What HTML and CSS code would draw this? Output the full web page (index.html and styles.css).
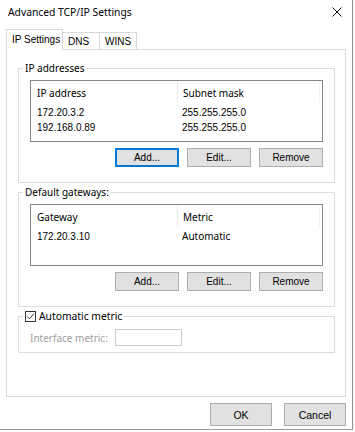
FILE: index.html
```html
<!DOCTYPE html>
<html lang="en">

<head>
    <meta charset="UTF-8">
    <meta name="viewport" content="width=device-width, initial-scale=1.0">
    <title>Advanced TCP/IP Settings</title>
    <link rel="stylesheet" href="styles.css">
</head>

<body>
    <div class="window">
        <div class="titlebar">
            <span class="title">Advanced TCP/IP Settings</span>
            <svg class="close" width="10" height="10" viewBox="0 0 10 10">
                <path d="M0.5 0.5 L9.5 9.5 M9.5 0.5 L0.5 9.5" stroke="#111" stroke-width="1" fill="none" />
            </svg>
        </div>

        <div class="tabs">
            <div class="tab active">IP Settings</div>
            <div class="tab">DNS</div>
            <div class="tab">WINS</div>
        </div>

        <div class="panel">
            <fieldset class="group">
                <legend>IP addresses</legend>
                <div class="listview">
                    <div class="lv-head">
                        <span class="col col-1">IP address</span>
                        <span class="col col-2">Subnet mask</span>
                    </div>
                    <div class="lv-row">
                        <span class="col col-1">172.20.3.2</span>
                        <span class="col col-2">255.255.255.0</span>
                    </div>
                    <div class="lv-row">
                        <span class="col col-1">192.168.0.89</span>
                        <span class="col col-2">255.255.255.0</span>
                    </div>
                </div>
                <div class="btn-row">
                    <button class="btn default">Add...</button>
                    <button class="btn">Edit...</button>
                    <button class="btn">Remove</button>
                </div>
            </fieldset>

            <fieldset class="group">
                <legend>Default gateways:</legend>
                <div class="listview">
                    <div class="lv-head">
                        <span class="col col-1">Gateway</span>
                        <span class="col col-2">Metric</span>
                    </div>
                    <div class="lv-row">
                        <span class="col col-1">172.20.3.10</span>
                        <span class="col col-2 ui">Automatic</span>
                    </div>
                </div>
                <div class="btn-row">
                    <button class="btn">Add...</button>
                    <button class="btn">Edit...</button>
                    <button class="btn">Remove</button>
                </div>
            </fieldset>

            <fieldset class="group metric-group">
                <legend class="check-legend">
                    <label class="checkbox">
                        <svg width="11" height="11" viewBox="0 0 11 11">
                            <rect x="0.5" y="0.5" width="10" height="10" fill="#fff" stroke="#333" />
                            <path d="M2.2 5.6 L4.4 7.8 L8.8 2.8" stroke="#333" stroke-width="1" fill="none" />
                        </svg>
                        Automatic metric
                    </label>
                </legend>
                <div class="metric-row">
                    <span class="disabled-label">Interface metric:</span>
                    <input type="text" class="metric-input" disabled>
                </div>
            </fieldset>
        </div>

        <div class="footer">
            <button class="btn big">OK</button>
            <button class="btn big">Cancel</button>
        </div>
    </div>
</body>

</html>
```

FILE: styles.css
```css
body {
    margin: 0;
    background-color: #fff;
    font-family: "Noto Sans", sans-serif;
    font-size: 10px;
    color: #000;
}

.window {
    width: 352px;
    height: 429px;
    border-right: 1px solid #8c8c8c;
    border-bottom: 1px solid #9a9a9a;
    box-shadow: 0 2px 1px rgba(0, 0, 0, 0.18);
    background: #fff;
}

.titlebar {
    height: 24px;
    display: flex;
    align-items: center;
    justify-content: space-between;
    padding: 0 10px 0 8px;
}

.title {
    font-size: 10.3px;
    color: #000;
}

.close {
    display: block;
}

.tabs {
    display: flex;
    align-items: flex-end;
    height: 19px;
    margin-top: 6px;
    padding-left: 6px;
    font-family: "Liberation Sans", sans-serif;
    font-size: 10px;
}

.tab {
    box-sizing: border-box;
    width: 37px;
    height: 17px;
    line-height: 18px;
    padding-left: 5px;
    white-space: nowrap;
    border: 1px solid #d9d9d9;
    border-bottom: none;
    border-left: none;
    background: #fff;
}

.tab.active {
    width: 57px;
    height: 21px;
    line-height: 19px;
    border-left: 1px solid #d9d9d9;
    margin-bottom: -1px;
    position: relative;
    z-index: 1;
}

.panel {
    margin: 0 6px;
    height: 348px;
    box-sizing: border-box;
    border: 1px solid #d9d9d9;
    padding: 11px 10px 0 11px;
}

.group {
    margin: 0 0 2px;
    padding: 5px 11px 15px 11px;
    border: 1px solid #dcdcdc;
    min-width: 0;
}

.group legend {
    padding: 0 2px;
    margin-left: -7px;
    line-height: 14px;
    font-size: 10px;
}

.listview {
    border: 1px solid #828790;
    height: 60px;
}

.lv-head {
    display: flex;
    height: 24px;
}

.lv-head .col-1 {
    border-right: 1px solid #e8e8e8;
    height: 21px;
    margin-top: 1px;
    line-height: 23px;
}

.lv-head .col-2 {
    flex: 1;
    border-right: 1px solid #f2f2f2;
    height: 21px;
    margin-top: 1px;
    line-height: 23px;
    margin-right: 2px;
}

.lv-row {
    display: flex;
    height: 15px;
    line-height: 15px;
    font-family: "Liberation Sans", sans-serif;
    font-size: 10px;
}

.lv-row .ui {
    font-family: "Noto Sans", sans-serif;
}

.col {
    display: block;
}

.col-1 {
    width: 140px;
    padding-left: 6px;
}

.col-2 {
    padding-left: 5px;
}

.btn-row {
    display: flex;
    justify-content: flex-end;
    gap: 8px;
    margin-top: 6px;
}

.btn {
    width: 64px;
    height: 19px;
    padding: 0;
    border: 1px solid #adadad;
    background: #e1e1e1;
    font-family: "Liberation Sans", sans-serif;
    font-size: 10px;
    color: #000;
}

.btn.default {
    border: 1px solid #0078d7;
    box-shadow: inset 0 0 0 1px #0078d7;
}

.metric-group {
    padding-bottom: 6px;
}

.check-legend {
    margin-left: -9px;
}

.checkbox {
    display: flex;
    align-items: center;
    gap: 3px;
    font-size: 10.3px;
}

.metric-row {
    display: flex;
    align-items: center;
    padding-top: 1px;
}

.disabled-label {
    width: 85px;
    color: #a0a0a0;
}

.metric-input {
    width: 67px;
    height: 17px;
    box-sizing: border-box;
    border: 1px solid #cccccc;
    background: #fff;
    margin: 0;
}

.footer {
    display: flex;
    justify-content: flex-end;
    gap: 12px;
    padding: 6px 6px 0 0;
}

.btn.big {
    width: 62px;
    height: 23px;
    font-size: 10.5px;
}
```
